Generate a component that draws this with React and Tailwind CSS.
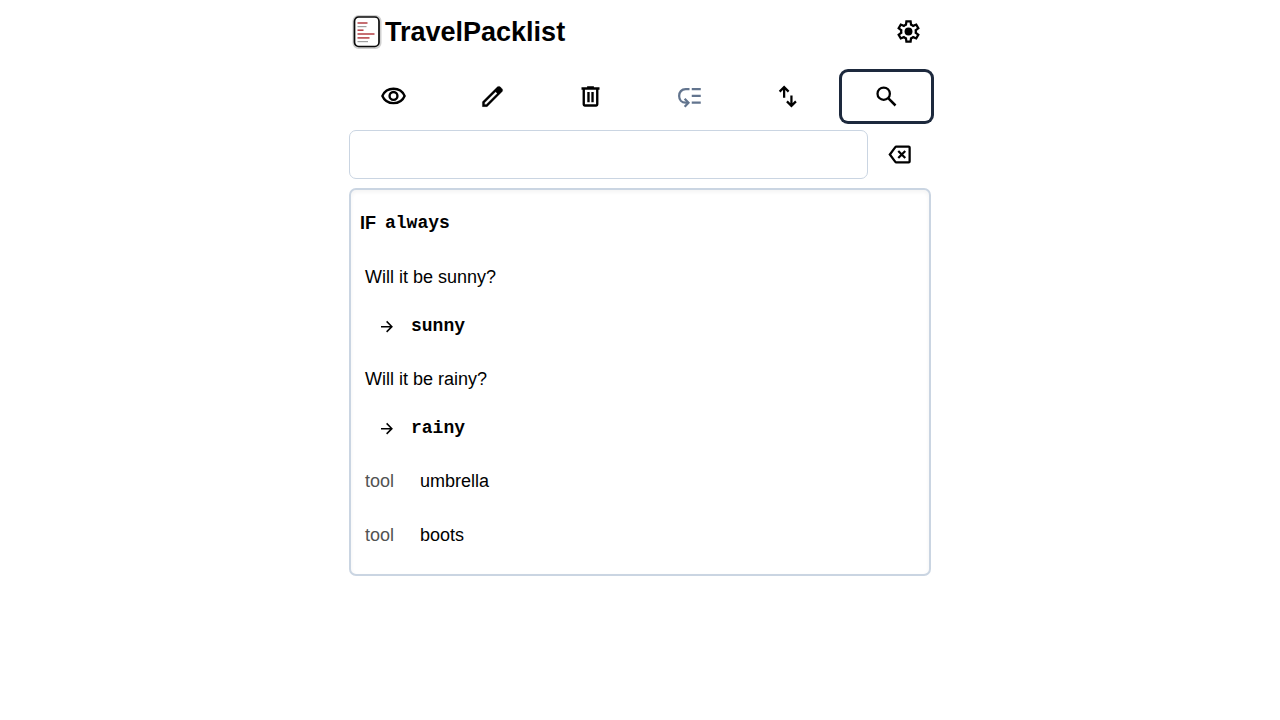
import { useState } from "react";

function Icon({ className = "size-[27px]", children }) {
  return (
    <svg viewBox="0 -960 960 960" className={className} fill="currentColor" aria-hidden="true">
      {children}
    </svg>
  );
}

function LineIcon({ className = "size-[27px]", width = 2.1, children }) {
  return (
    <svg
      viewBox="0 0 24 24"
      className={className}
      fill="none"
      stroke="currentColor"
      strokeWidth={width}
      aria-hidden="true"
    >
      {children}
    </svg>
  );
}

const EyeIcon = () => (
  <LineIcon>
    <path d="M2.1 11.5C3.8 7.6 7.6 5.1 12 5.1s8.2 2.5 9.9 6.4c-1.7 3.900-5.500 6.400-9.900 6.400s-8.200-2.500-9.900-6.400Z" strokeLinejoin="round" />
    <circle cx="12" cy="11.5" r="3.5" />
  </LineIcon>
);

const PencilIcon = () => (
  <Icon>
    <path
      stroke="currentColor"
      strokeWidth="10"
      d="M200-200h57l391-391-57-57-391 391v57Zm-80 80v-170l528-527q12-11 26.500-17t30.500-6q16 0 31 6t26 18l55 56q12 11 17.500 26t5.500 30q0 16-5.500 30.500T817-647L290-120H120Z"
    />
  </Icon>
);

const TrashIcon = () => (
  <LineIcon width={2.1}>
    <path d="M4 4.900h16M9 4h6M6 5v14.200q0 .8.8.8h10.400q.8 0 .8-.8V5" />
    <path d="M10.200 8v9M13.800 8v9" />
  </LineIcon>
);

const MoveIcon = () => (
  <LineIcon width={2}>
    <path d="M14 5.500h8M14 11.500h8M14 17.500h8M12 5.500H8.600C4.900 5.500 2.800 8.100 2.800 11.500s2.300 6 5.700 6h1.300" />
    <path d="m7.700 14 3.400 3.600-3.400 3.600" />
  </LineIcon>
);

const SortIcon = () => (
  <LineIcon width={2}>
    <path d="M9 13V4M5 7.700 9 3.700l4 4M15.500 11v9M11.500 16.300l4 4 4-4" />
  </LineIcon>
);

const SearchIcon = () => (
  <LineIcon width={2}>
    <circle cx="9.500" cy="9.500" r="5.500" />
    <path d="m13.500 13.500 6.500 6.500" strokeWidth="2.200" />
  </LineIcon>
);

const ClearIcon = () => (
  <LineIcon width={2}>
    <path d="M9 5h11.200q.8 0 .8.800v12.400q0 .8-.8.800H9q-.4 0-.7-.4L3.400 12l4.900-6.600q.3-.4.700-.4Z" />
    <path d="m10.900 8.900 6.200 6.200M17.100 8.900l-6.200 6.200" />
  </LineIcon>
);

const GearIcon = () => (
  <Icon>
    <path d="m370-80-16-128q-13-5-24.500-12T307-235l-119 50L78-375l103-78q-1-7-1-13.500v-27q0-6.500 1-13.500L78-585l110-190 119 50q11-8 23-15t24-12l16-128h220l16 128q13 5 24.500 12t22.500 15l119-50 110 190-103 78q1 7 1 13.500v27q0 6.500-2 13.500l103 78-110 190-118-50q-11 8-23 15t-24 12L590-80H370Zm70-80h79l14-106q31-8 57.500-23.500T639-327l99 41 39-68-86-65q5-14 7-29.500t2-31.500q0-16-2-31.500t-7-29.500l86-65-39-68-99 42q-22-23-48.500-38.500T533-694l-13-106h-79l-14 106q-31 8-57.500 23.500T321-633l-99-41-39 68 86 64q-5 15-7 30t-2 32q0 16 2 31t7 30l-86 65 39 68 99-42q22 23 48.500 38.500T427-266l13 106Z" />
    <circle cx="480" cy="-480" r="140" />
  </Icon>
);

const ArrowIcon = () => (
  <LineIcon className="size-[18px]" width={2}>
    <path d="M4 11.500h14.500M11.500 4.500l7 7-7 7" />
  </LineIcon>
);

function Logo() {
  return (
    <svg viewBox="0 0 36 36" className="size-9" fill="none" aria-hidden="true">
      <rect x="4.500" y="2" width="27" height="32" rx="5" stroke="#d0d0d0" strokeWidth="2" />
      <rect x="5.500" y="3" width="24.500" height="29.500" rx="4.200" fill="#fff" stroke="#0b0b0b" strokeWidth="1.700" />
      <g stroke="#b8494f" strokeWidth="1.600">
        <path d="M8.500 9h10" />
        <path d="M8.500 16.200h6" />
        <path d="M8.500 20h17" />
        <path d="M8.500 23.900h12" />
      </g>
      <g stroke="#a0a0a0" strokeWidth="1.200">
        <path d="M8.500 12.600h9" />
        <path d="M8.500 27.600h10.500" />
      </g>
    </svg>
  );
}

const MODES = [
  { id: "view", label: "View", Glyph: EyeIcon },
  { id: "edit", label: "Edit", Glyph: PencilIcon },
  { id: "delete", label: "Delete", Glyph: TrashIcon },
  { id: "move", label: "Move", Glyph: MoveIcon, disabled: true },
  { id: "sort", label: "Sort", Glyph: SortIcon },
  { id: "search", label: "Search", Glyph: SearchIcon },
];

const QUESTIONS = [
  { text: "Will it be sunny?", variable: "sunny" },
  { text: "Will it be rainy?", variable: "rainy" },
];

const ITEMS = [
  { category: "tool", name: "umbrella" },
  { category: "tool", name: "boots" },
];

export default function App() {
  const [mode, setMode] = useState("search");
  const [query, setQuery] = useState("");

  return (
    <div className="mx-auto w-full max-w-[582px] font-['Liberation_Sans',Arial,sans-serif] text-lg leading-[27px] text-black">
      <header className="flex h-[63px] items-center justify-between">
        <div className="flex items-center">
          <Logo />
          <h1 className="text-[27px] leading-9 font-bold">TravelPacklist</h1>
        </div>
        <button type="button" aria-label="Settings" className="p-[9px]">
          <GearIcon />
        </button>
      </header>

      <nav aria-label="Modes" className="mt-[9px] grid grid-cols-6 gap-[9px]">
        {MODES.map(({ id, label, Glyph, disabled }) => (
          <button
            key={id}
            type="button"
            aria-label={label}
            aria-pressed={mode === id}
            disabled={disabled}
            onClick={() => setMode(id)}
            className="flex h-[49px] items-center justify-center rounded-md disabled:text-slate-500 aria-pressed:ring-3 aria-pressed:ring-slate-800"
          >
            <Glyph />
          </button>
        ))}
      </nav>

      <div className="mt-[9px] flex">
        <input
          type="text"
          aria-label="Search items"
          value={query}
          onChange={(event) => setQuery(event.target.value)}
          className="h-[49px] min-w-0 grow rounded-[7px] border border-slate-300 px-[9px] outline-none"
        />
        <button type="button" aria-label="Clear search" onClick={() => setQuery("")} className="px-[18px]">
          <ClearIcon />
        </button>
      </div>

      <main className="mt-[9px] rounded-[7px] border-2 border-slate-300 px-[9px] pt-[6px] pb-3 shadow-inner">
        <h2 className="flex h-[54px] items-center gap-[9px] font-bold">
          IF
          <span className="font-['Liberation_Mono',monospace]">always</span>
        </h2>
        <ul className="px-[5px]">
          {QUESTIONS.map(({ text, variable }) => (
            <li key={variable} className="mb-[3px]">
              <p className="flex h-[54px] items-center">{text}</p>
              <p className="flex h-[45px] items-center gap-[15px] pl-[13px]">
                <ArrowIcon />
                <span className="font-['Liberation_Mono',monospace] font-bold">{variable}</span>
              </p>
            </li>
          ))}
          {ITEMS.map(({ category, name }) => (
            <li key={name} className="flex h-[54px] items-center gap-[26px]">
              <span className="text-neutral-600">{category}</span>
              <span>{name}</span>
            </li>
          ))}
        </ul>
      </main>
    </div>
  );
}
